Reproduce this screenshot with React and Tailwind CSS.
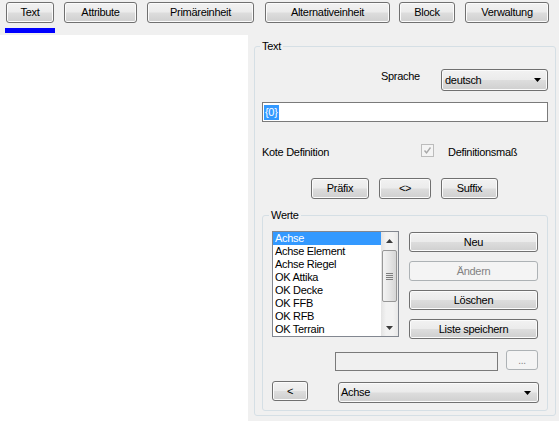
import React from "react";

const BTN =
  "flex items-center justify-center border border-[#707070] rounded-[3px] bg-[linear-gradient(180deg,#f2f2f2_0%,#ebebeb_48%,#dddddd_52%,#cfcfcf_100%)] shadow-[inset_0_0_0_1px_#fbfbfb] text-black";
const DIS =
  "flex items-center justify-center border border-[#adb2b5] rounded-[3px] bg-[#f4f4f4] text-[#838383]";
const COMBO =
  "flex items-center justify-between border border-[#707070] rounded-[3px] bg-[linear-gradient(180deg,#f2f2f2_0%,#ebebeb_48%,#dddddd_52%,#cfcfcf_100%)] shadow-[inset_0_0_0_1px_#fbfbfb] text-black";

function Arrow({ up = false, color = "#000" }) {
  return (
    <svg width="7" height="4" viewBox="0 0 7 4" className="shrink-0">
      <path d={up ? "M0 4H7L3.5 0Z" : "M0 0H7L3.5 4Z"} fill={color} />
    </svg>
  );
}

const ITEMS = [
  "Achse",
  "Achse Element",
  "Achse Riegel",
  "OK Attika",
  "OK Decke",
  "OK FFB",
  "OK RFB",
  "OK Terrain",
];

export default function App() {
  return (
    <div className="w-[559px] h-[421px] bg-[#f0f0f0] overflow-hidden flex flex-col font-['Liberation_Sans',Arial,sans-serif] text-[11px] leading-[13px] tracking-[-0.3px] text-black">
      {/* top tab buttons */}
      <div className="flex pt-[2px] h-[23px] shrink-0">
        <div className={`${BTN} ml-[6px] w-[48px] h-[21px]`}>Text</div>
        <div className={`${BTN} ml-[10px] w-[73px] h-[21px]`}>Attribute</div>
        <div className={`${BTN} ml-[10px] w-[107px] h-[21px]`}>Primäreinheit</div>
        <div className={`${BTN} ml-[11px] w-[125px] h-[21px]`}>Alternativeinheit</div>
        <div className={`${BTN} ml-[9px] w-[56px] h-[21px]`}>Block</div>
        <div className={`${BTN} ml-[10px] w-[84px] h-[21px]`}>Verwaltung</div>
      </div>
      <div className="ml-[5px] mt-[5px] w-[50px] h-[5px] bg-[#0000ff] shrink-0" />

      <div className="flex flex-1 mt-[2px]">
        <div className="w-[248px] bg-white" />
        <div className="flex-1 pl-[6px] pt-[5px]">
          <fieldset className="w-[302px] h-[376px] border border-[#d5dfe5] rounded-[3px]">
            <legend className="ml-[5px] px-[2px]">Text</legend>

            {/* Sprache */}
            <div className="flex items-start mt-[16px] pl-[126px]">
              <span className="w-[60px] mt-[1px]">Sprache</span>
              <div className={`${COMBO} w-[107px] h-[22px] pl-[3px] pr-[6px]`}>
                <span>deutsch</span>
                <Arrow />
              </div>
            </div>

            {/* text input */}
            <div className="ml-[7px] mt-[11px] w-[286px] h-[20px] border border-[#7a7a7a] bg-white flex items-center pl-[1px]">
              <span className="bg-[#3399ff] text-white h-[15px] leading-[15px] px-[1px]">{"{0}"}</span>
            </div>

            {/* Kote Definition */}
            <div className="flex items-start mt-[22px] pl-[7px]">
              <span className="w-[159px] mt-[2px]">Kote Definition</span>
              <div className="w-[13px] h-[13px] border border-[#bcbcbc] bg-[#f4f4f4] flex items-center justify-center">
                <svg width="9" height="9" viewBox="0 0 9 9">
                  <path d="M1.5 4.5L3.5 6.8L7.5 1.5" fill="none" stroke="#a8a8a8" strokeWidth="1.4" />
                </svg>
              </div>
              <span className="ml-[14px] mt-[2px]">Definitionsmaß</span>
            </div>

            {/* Präfix <> Suffix */}
            <div className="flex mt-[19px] pl-[56px]">
              <div className={`${BTN} w-[58px] h-[21px]`}>Präfix</div>
              <div className={`${BTN} ml-[10px] w-[52px] h-[21px]`}>&lt;&gt;</div>
              <div className={`${BTN} ml-[10px] w-[57px] h-[21px]`}>Suffix</div>
            </div>

            {/* Werte group */}
            <fieldset className="ml-[7px] mt-[10px] w-[286px] h-[202px] border border-[#d5dfe5] rounded-[3px]">
              <legend className="ml-[6px] px-[2px]">Werte</legend>

              <div className="flex items-start h-[106px] mt-[9px] pl-[9px]">
                {/* listbox */}
                <div className="w-[127px] h-[106px] border border-[#828790] bg-white flex">
                  <div className="flex-1 flex flex-col">
                    {ITEMS.map((it, i) => (
                      <div
                        key={it}
                        className={
                          i === 0
                            ? "h-[13px] pl-[2px] bg-[#3399ff] text-white"
                            : "h-[13px] pl-[2px]"
                        }
                      >
                        {it}
                      </div>
                    ))}
                  </div>
                  <div className="w-[17px] flex flex-col bg-[linear-gradient(90deg,#e3e3e3,#f2f2f2_30%,#f2f2f2_70%,#e8e8e8)]">
                    <div className="h-[17px] flex items-center justify-center">
                      <Arrow up color="#3c3c3c" />
                    </div>
                    <div className="flex-1">
                      <div className="mt-[1px] mx-[1px] h-[52px] border border-[#979797] rounded-[2px] bg-[linear-gradient(90deg,#f3f3f3,#e6e6e6_50%,#d6d6d6)] flex flex-col items-center justify-center gap-[1px]">
                        <div className="w-[7px] h-[1px] bg-[#7e7e7e]" />
                        <div className="w-[7px] h-[1px] bg-[#7e7e7e]" />
                        <div className="w-[7px] h-[1px] bg-[#7e7e7e]" />
                        <div className="w-[7px] h-[1px] bg-[#7e7e7e]" />
                      </div>
                    </div>
                    <div className="h-[17px] flex items-center justify-center">
                      <Arrow color="#3c3c3c" />
                    </div>
                  </div>
                </div>

                {/* buttons column */}
                <div className="ml-[10px] mt-[1px] flex flex-col gap-[9px]">
                  <div className={`${BTN} w-[129px] h-[20px]`}>Neu</div>
                  <div className={`${DIS} w-[129px] h-[20px]`}>Ändern</div>
                  <div className={`${BTN} w-[129px] h-[20px]`}>Löschen</div>
                  <div className={`${BTN} w-[129px] h-[20px]`}>Liste speichern</div>
                </div>
              </div>

              {/* textbox + ... */}
              <div className="flex items-start mt-[13px]">
                <div className="ml-[72px] mt-[2px] w-[163px] h-[19px] border border-[#7a7a7a] bg-[#f0f0f0]" />
                <div className={`${DIS} ml-[8px] w-[32px] h-[20px] text-[10px]`}>...</div>
              </div>

              {/* < + Achse */}
              <div className="flex items-start mt-[10px]">
                <div className={`${BTN} ml-[9px] w-[36px] h-[20px]`}>&lt;</div>
                <div className={`${COMBO} ml-[30px] mt-[1px] w-[201px] h-[21px] pl-[2px] pr-[7px]`}>
                  <span>Achse</span>
                  <Arrow />
                </div>
              </div>
            </fieldset>
          </fieldset>
        </div>
      </div>
    </div>
  );
}
